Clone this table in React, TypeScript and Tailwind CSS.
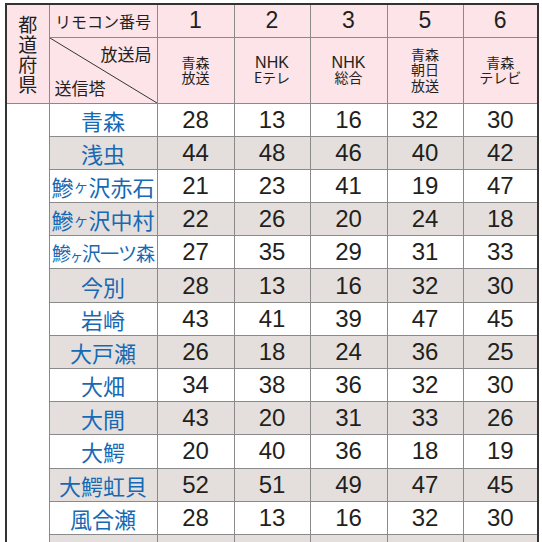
const rows: { name: React.ReactNode; nums: number[] }[] = [
  { name: "青森", nums: [28, 13, 16, 32, 30] },
  { name: "浅虫", nums: [44, 48, 46, 40, 42] },
  { name: <>鰺<span className="text-[15px]">ヶ</span>沢赤石</>, nums: [21, 23, 41, 19, 47] },
  { name: <>鰺<span className="text-[15px]">ヶ</span>沢中村</>, nums: [22, 26, 20, 24, 18] },
  {
    name: (
      <span className="text-[19px] tracking-[-1px]">
        鰺<span className="text-[13px]">ヶ</span>沢一ツ森
      </span>
    ),
    nums: [27, 35, 29, 31, 33],
  },
  { name: "今別", nums: [28, 13, 16, 32, 30] },
  { name: "岩崎", nums: [43, 41, 39, 47, 45] },
  { name: "大戸瀬", nums: [26, 18, 24, 36, 25] },
  { name: "大畑", nums: [34, 38, 36, 32, 30] },
  { name: "大間", nums: [43, 20, 31, 33, 26] },
  { name: "大鰐", nums: [20, 40, 36, 18, 19] },
  { name: "大鰐虹貝", nums: [52, 51, 49, 47, 45] },
  { name: "風合瀬", nums: [28, 13, 16, 32, 30] },
  { name: "蟹田", nums: [48, 46, 36, 40, 44] },
];

const channels = ["1", "2", "3", "5", "6"];
const stations = [["青森", "放送"], ["NHK", "Eテレ"], ["NHK", "総合"], ["青森", "朝日", "放送"], ["青森", "テレビ"]];

export default function App() {
  const jp = "font-['Noto_Sans_CJK_JP',sans-serif]";
  const num = "font-['Liberation_Sans','Noto_Sans_CJK_JP',sans-serif]";
  const cell = "border border-[#8a8a8a] p-0 text-center align-middle";

  return (
    <div className="w-[542px] h-[542px] overflow-hidden bg-white">
      <div className="ml-[5px] mt-[3px] w-[534px] border-2 border-[#333]">
        <table className="w-full table-fixed border-collapse border-hidden">
          <colgroup>
            <col className="w-[42px]" />
            <col className="w-[108px]" />
            <col className="w-[77px]" />
            <col className="w-[76px]" />
            <col className="w-[77px]" />
            <col className="w-[76px]" />
            <col className="w-[74px]" />
          </colgroup>
          <thead>
            <tr>
              <td rowSpan={2} className={`${cell} bg-[#fce4e9]`}>
                <div className={`${jp} text-[19px] leading-[20px] text-[#231f20] flex flex-col items-center`}>
                  <span>都</span>
                  <span>道</span>
                  <span>府</span>
                  <span>県</span>
                </div>
              </td>
              <td className={`${cell} bg-[#fce4e9] ${jp} text-[16px] leading-none text-[#231f20]`}>
                <div className="h-[31.5px] flex items-center justify-center">リモコン番号</div>
              </td>
              {channels.map((c) => (
                <td key={c} className={`${cell} bg-[#fce4e9] ${num} text-[23px] leading-none text-[#231f20]`}>
                  <div className="h-[31.5px] flex items-center justify-center">{c}</div>
                </td>
              ))}
            </tr>
            <tr>
              <td className={`${cell} bg-[#fce4e9] relative`}>
                <svg className="absolute inset-0 w-full h-full" preserveAspectRatio="none" viewBox="0 0 100 100">
                  <line x1="0" y1="0" x2="100" y2="100" stroke="#333" strokeWidth="1" vectorEffect="non-scaling-stroke" />
                </svg>
                <div className={`${jp} h-[65px] flex flex-col justify-between text-[17px] leading-[20px] text-[#231f20] pt-[6px] pb-[5px] px-[5px]`}>
                  <span className="text-right">放送局</span>
                  <span className="text-left">送信塔</span>
                </div>
              </td>
              {stations.map((s, i) => (
                <td key={i} className={`${cell} bg-[#fce4e9]`}>
                  <div className={`${jp} h-[65px] text-[14px] leading-[15.5px] text-[#231f20] flex flex-col items-center justify-center`}>
                    {s.map((l) => (
                      <span key={l} className={l === "NHK" ? `${num} text-[16px]` : ""}>
                        {l}
                      </span>
                    ))}
                  </div>
                </td>
              ))}
            </tr>
          </thead>
          <tbody>
            {rows.map((r, i) => {
              const bg = i % 2 === 1 ? "bg-[#e4dfdd]" : "bg-white";
              return (
                <tr key={i}>
                  {i === 0 && <td rowSpan={rows.length} className={`${cell} bg-white`} />}
                  <td className={`${cell} ${bg} ${jp} text-[22px] leading-none text-[#1669b4] whitespace-nowrap`}>
                    <div className="h-[32.2px] flex items-center justify-center">{r.name}</div>
                  </td>
                  {r.nums.map((n, j) => (
                    <td key={j} className={`${cell} ${bg} ${num} text-[24px] leading-none text-[#231f20]`}>
                      <div className="h-[32.2px] flex items-center justify-center">{n}</div>
                    </td>
                  ))}
                </tr>
              );
            })}
          </tbody>
        </table>
      </div>
    </div>
  );
}
